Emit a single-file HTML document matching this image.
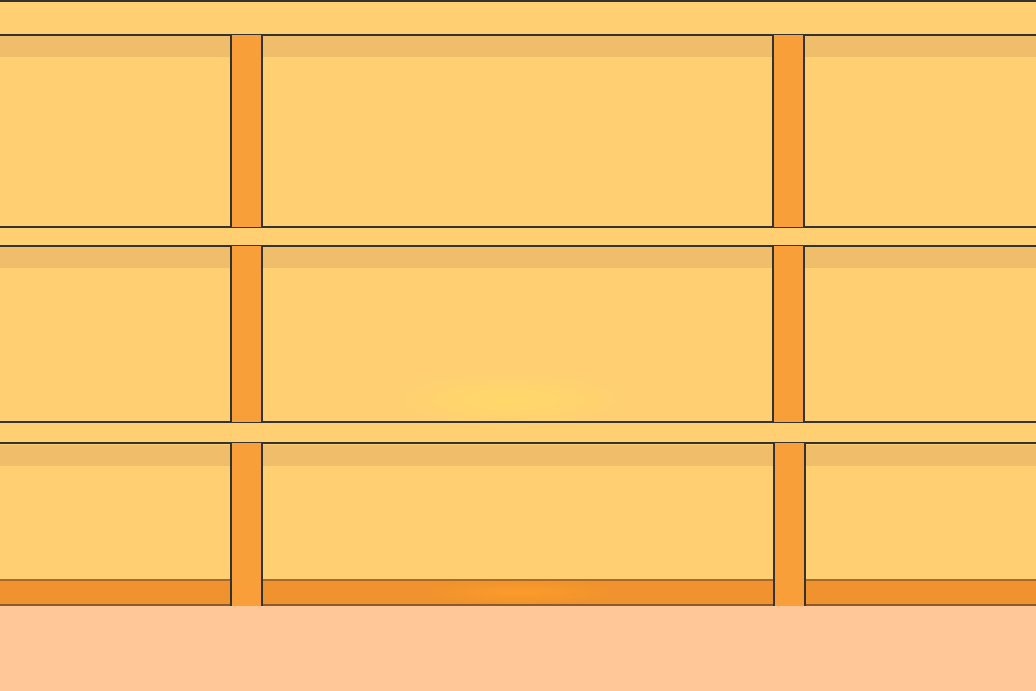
<html><body style="margin:0;width:1036px;height:691px;overflow:hidden;position:relative;background:#ffc697">
<style>
div{position:absolute;box-sizing:border-box}
.ln{background:#333;height:2px;left:0;width:1036px}
.p{background:#f89f3a;border-left:2px solid #333;border-right:2px solid #333;width:33px}
.sh{background:#f0be6a;left:0;width:1036px;height:21px}
</style>
<div style="left:0;top:0;width:1036px;height:606px;background:#ffcf72"></div>
<div class="sh" style="top:36px"></div>
<div class="sh" style="top:247px"></div>
<div class="sh" style="top:445px"></div>
<div style="left:0;top:579px;width:1036px;height:27px;background:#f0922e;border-top:2px solid #a86a2a"></div>
<div style="left:420px;top:580px;width:200px;height:25px;background:radial-gradient(ellipse at center,#fb9c2a,transparent 70%)"></div>
<div style="left:380px;top:370px;width:260px;height:60px;background:radial-gradient(ellipse at center,#ffd86a,transparent 70%)"></div>
<div class="ln" style="top:0"></div>
<div class="ln" style="top:34px"></div>
<div class="ln" style="top:226px"></div>
<div class="ln" style="top:245px"></div>
<div class="ln" style="top:421px"></div>
<div class="ln" style="top:442px"></div>
<div class="ln" style="top:604px;background:#8a5a2a"></div>
<div class="p" style="left:230px;top:35px;height:192px"></div>
<div class="p" style="left:772px;top:35px;height:192px"></div>
<div class="p" style="left:230px;top:246px;height:176px"></div>
<div class="p" style="left:772px;top:246px;height:176px"></div>
<div class="p" style="left:230px;top:443px;height:163px"></div>
<div class="p" style="left:773px;top:443px;height:163px"></div>
</body></html>
